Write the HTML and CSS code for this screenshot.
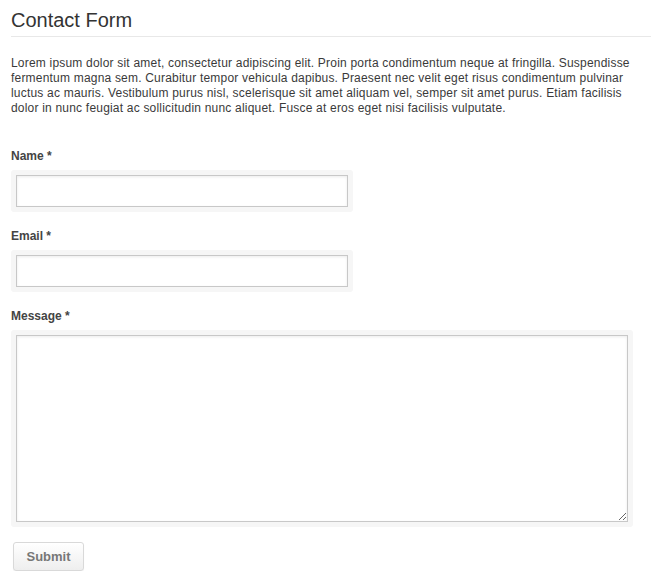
FILE: index.html
```html
<!DOCTYPE html>
<html>
<head>
<meta charset="utf-8">
<link rel="stylesheet" href="styles.css">
</head>
<body>
<div class="page">
  <h1 class="title">Contact Form</h1>
  <p class="intro">Lorem ipsum dolor sit amet, consectetur adipiscing elit. Proin porta condimentum neque at fringilla. Suspendisse fermentum magna sem. Curabitur tempor vehicula dapibus. Praesent nec velit eget risus condimentum pulvinar luctus ac mauris. Vestibulum purus nisl, scelerisque sit amet aliquam vel, semper sit amet purus. Etiam facilisis dolor in nunc feugiat ac sollicitudin nunc aliquet. Fusce at eros eget nisi facilisis vulputate.</p>
  <form class="form">
    <div class="field">
      <label class="label" for="name">Name *</label>
      <div class="wrap wrap-short"><input class="input" id="name" type="text"></div>
    </div>
    <div class="field">
      <label class="label" for="email">Email *</label>
      <div class="wrap wrap-short"><input class="input" id="email" type="text"></div>
    </div>
    <div class="field">
      <label class="label" for="message">Message *</label>
      <div class="wrap wrap-long"><textarea class="textarea" id="message"></textarea></div>
    </div>
    <button class="submit" type="button">Submit</button>
  </form>
</div>
</body>
</html>
```
FILE: styles.css
```css
html, body {
  margin: 0;
  padding: 0;
  background: #fff;
}
body {
  font-family: "Liberation Sans", Arial, sans-serif;
  color: #333;
}
.page {
  padding: 0 11px;
}
.title {
  margin: 8px 0 0;
  padding-bottom: 4px;
  font-size: 20px;
  line-height: 24px;
  font-weight: normal;
  color: #333;
  border-bottom: 1px solid #e8e8e8;
}
.intro {
  margin: 19px 0 0;
  font-size: 12px;
  line-height: 15px;
  letter-spacing: 0.2px;
  color: #3a3a3a;
}
.form {
  display: flex;
  flex-direction: column;
  align-items: flex-start;
  margin-top: 31px;
}
.field {
  display: flex;
  flex-direction: column;
  align-items: flex-start;
  margin-bottom: 15px;
}
.label {
  font-size: 12px;
  line-height: 16px;
  font-weight: bold;
  color: #444;
  margin: 1px 0 6px;
}
.wrap {
  background: #f6f6f6;
  border-radius: 3px;
  padding: 5px;
  display: flex;
}
.input, .textarea {
  box-sizing: border-box;
  margin: 0;
  border: 1px solid #c8c8c8;
  background: #fff;
  box-shadow: inset 0 1px 3px rgba(0, 0, 0, 0.08);
  font-family: "Liberation Sans", Arial, sans-serif;
  font-size: 12px;
  outline: none;
}
.input {
  width: 332px;
  height: 32px;
}
.textarea {
  width: 612px;
  height: 187px;
  display: block;
}
.submit {
  margin-left: 2px;
  width: 71px;
  height: 29px;
  box-sizing: border-box;
  border: 1px solid #d9d9d9;
  border-radius: 3px;
  background: linear-gradient(#ffffff, #eeeeee);
  box-shadow: 0 1px 1px rgba(0, 0, 0, 0.05);
  font-family: "Liberation Sans", Arial, sans-serif;
  font-size: 13px;
  font-weight: bold;
  color: #777;
  padding: 0;
}
```
